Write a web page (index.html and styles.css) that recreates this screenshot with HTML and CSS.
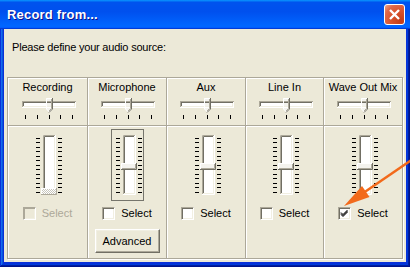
FILE: index.html
```html
<!DOCTYPE html>
<html>
<head>
  <title>Record from...</title>
  <link rel="stylesheet" href="styles.css">
</head>
<body>

<svg class="defs" width="0" height="0">
  <defs>
    <pattern id="hatch" width="2" height="2" patternUnits="userSpaceOnUse">
      <rect width="2" height="2" fill="#fff"/>
      <rect width="1" height="1" fill="#c8c6bc"/>
      <rect x="1" y="1" width="1" height="1" fill="#c8c6bc"/>
    </pattern>
    <symbol id="hslider" viewBox="0 0 56 22">
      <rect x="2" y="3" width="54" height="7" fill="#fff"/>
      <polygon points="26,0 33,0 33,11 29.5,14.5 26,11" fill="#f4f3ee"/>
      <g fill="none">
        <path d="M2 3.5H56M2.5 3V10" stroke="#aca899"/>
        <path d="M3 4.5H55M3.5 4V9" stroke="#716f64"/>
        <path d="M3 8.5H55M54.5 5V9" stroke="#f1efe2"/>
        <path d="M2 9.5H56M55.5 4V10" stroke="#fff"/>
        <path d="M26.5 11V0.5H32" stroke="#fff"/>
        <path d="M26.5 11L29.5 14" stroke="#fff"/>
        <path d="M32.5 0V11L29 14.5" stroke="#716f64"/>
        <path d="M31.5 1V10.5L29 13" stroke="#aca899"/>
      </g>
      <rect x="5" y="17" width="1" height="4"/>
      <rect x="17" y="17" width="1" height="4"/>
      <rect x="29" y="17" width="1" height="4"/>
      <rect x="40" y="17" width="1" height="4"/>
      <rect x="52" y="17" width="1" height="4"/>
    </symbol>
    <symbol id="vtrack" viewBox="0 0 33 72">
      <rect x="12" y="6" width="12" height="60" fill="#fff"/>
      <g fill="none">
        <path d="M12.5 66V6.5H24" stroke="#aca899"/>
        <path d="M13.5 65V7.5H23" stroke="#716f64"/>
        <path d="M13 64.5H23.5V8" stroke="#f1efe2"/>
        <path d="M12 65.5H24.5V6" stroke="#fff"/>
        <path d="M5 9.5h4M5 13.5h4M5 18.5h4M5 22.5h4M5 27.5h4M5 31.5h4M5 36.5h4M5 40.5h4M5 45.5h4M5 49.5h4M5 54.5h4M5 58.5h4M5 63.5h4" stroke="#000"/>
        <path d="M27 9.5h4M27 13.5h4M27 18.5h4M27 22.5h4M27 27.5h4M27 31.5h4M27 36.5h4M27 40.5h4M27 45.5h4M27 49.5h4M27 54.5h4M27 58.5h4M27 63.5h4" stroke="#000"/>
      </g>
    </symbol>
    <symbol id="vthumb" viewBox="0 0 16 7">
      <rect width="16" height="7" fill="#f4f3ee"/>
      <g fill="none">
        <path d="M0.5 7V0.5H16" stroke="#fff"/>
        <path d="M0 6.5H15.5V0" stroke="#716f64"/>
        <path d="M1 5.5H14.5V1" stroke="#aca899"/>
      </g>
    </symbol>
  </defs>
</svg>

<div class="window">
  <div class="titlebar">
    <span class="title">Record from...</span>
    <span class="close">
      <svg width="13" height="13" viewBox="0 0 13 13">
        <path d="M2 2L11 11M11 2L2 11" stroke="#fff" stroke-width="2.4"/>
      </svg>
    </span>
  </div>

  <div class="client">
    <p class="prompt">Please define your audio source:</p>

    <div class="mixer">
      <div class="col">
        <div class="top">
          <span class="label">Recording</span>
          <svg class="hslider"><use href="#hslider"/></svg>
        </div>
        <div class="bottom">
          <svg class="vslider" viewBox="0 0 33 72">
            <use href="#vtrack" width="33" height="72"/>
            <rect x="10" y="59" width="16" height="7" fill="url(#hatch)"/>
            <g fill="none">
              <path d="M10.5 66V59.5H26" stroke="#fff"/>
              <path d="M10 65.5H25.5V59" stroke="#aca899"/>
            </g>
          </svg>
          <div class="choice disabled"><span class="box"></span>Select</div>
        </div>
      </div>

      <div class="col">
        <div class="top">
          <span class="label">Microphone</span>
          <svg class="hslider"><use href="#hslider"/></svg>
        </div>
        <div class="bottom">
          <svg class="vslider" viewBox="0 0 33 72">
            <rect x="0.5" y="0.5" width="32" height="71" fill="none" stroke="#000" stroke-dasharray="1 1"/>
            <use href="#vtrack" width="33" height="72"/>
            <use href="#vthumb" x="10" y="34" width="16" height="7"/>
          </svg>
          <div class="choice"><span class="box"></span>Select</div>
          <button type="button" class="btn">Advanced</button>
        </div>
      </div>

      <div class="col">
        <div class="top">
          <span class="label">Aux</span>
          <svg class="hslider"><use href="#hslider"/></svg>
        </div>
        <div class="bottom">
          <svg class="vslider" viewBox="0 0 33 72">
            <use href="#vtrack" width="33" height="72"/>
            <use href="#vthumb" x="10" y="34" width="16" height="7"/>
          </svg>
          <div class="choice"><span class="box"></span>Select</div>
        </div>
      </div>

      <div class="col">
        <div class="top">
          <span class="label">Line In</span>
          <svg class="hslider"><use href="#hslider"/></svg>
        </div>
        <div class="bottom">
          <svg class="vslider" viewBox="0 0 33 72">
            <use href="#vtrack" width="33" height="72"/>
            <use href="#vthumb" x="10" y="34" width="16" height="7"/>
          </svg>
          <div class="choice"><span class="box"></span>Select</div>
        </div>
      </div>

      <div class="col">
        <div class="top">
          <span class="label">Wave Out Mix</span>
          <svg class="hslider"><use href="#hslider"/></svg>
        </div>
        <div class="bottom">
          <svg class="vslider" viewBox="0 0 33 72">
            <use href="#vtrack" width="33" height="72"/>
            <use href="#vthumb" x="10" y="34" width="16" height="7"/>
          </svg>
          <div class="choice">
            <span class="box">
              <svg width="11" height="11" viewBox="0 0 11 11">
                <path d="M2 4.5L4 6.5L8.5 2M2 5.5L4 7.5L8.5 3M2 6.5L4 8.5L8.5 4" stroke="#000" fill="none"/>
              </svg>
            </span>Select
          </div>
        </div>
      </div>
    </div>
  </div>

  <svg class="arrow" width="410" height="267" viewBox="0 0 410 267">
    <line x1="413" y1="159" x2="364" y2="192.5" stroke="#f26a1b" stroke-width="2.5"/>
    <polygon points="344,206 369.5,197 362,186" fill="#f26a1b"/>
  </svg>
</div>

</body>
</html>
```

FILE: styles.css
```css
* {
  box-sizing: border-box;
}

body {
  margin: 0;
  width: 410px;
  height: 267px;
  overflow: hidden;
  font-family: "Liberation Sans", Arial, sans-serif;
  font-size: 11px;
  color: #000;
}

.defs {
  position: absolute;
}

.window {
  position: relative;
  width: 410px;
  height: 267px;
  display: flex;
  flex-direction: column;
  background-color: #0831d9;
  box-shadow: inset -1px -1px #00138c, inset 1px 1px #0831d9, inset -2px -2px #001ea0,
    inset 2px 2px #166aee, inset -3px -3px #003bda, inset 3px 3px #0855dd;
}

.titlebar {
  height: 29px;
  flex: none;
  display: flex;
  align-items: center;
  justify-content: space-between;
  padding: 0 5px 1px 7px;
  background: linear-gradient(180deg, #0997ff, #0053ee 8%, #0050ee 40%, #0066ff 88%,
    #0066ff 93%, #005bff 95%, #003dd7 96%, #003dd7);
}

.title {
  color: #fff;
  font-weight: bold;
  font-size: 13px;
  letter-spacing: 0.2px;
  text-shadow: 1px 1px #0f1089;
}

.close {
  width: 21px;
  height: 21px;
  display: flex;
  align-items: center;
  justify-content: center;
  border: 1px solid #fff;
  border-radius: 3px;
  background: radial-gradient(circle at 85% 85%, #c23c17 0%, #d9532c 45%, #e0694a 75%, #eea58c 100%);
}

.client {
  flex: 1;
  margin: 0 4px 5px;
  padding: 12px 3px 3px;
  background: #ece9d8;
}

.prompt {
  margin: 0 0 23px 5px;
  line-height: 13px;
  letter-spacing: -0.2px;
}

.mixer {
  display: grid;
  grid-template-columns: 80px 79px 79px 78px 78px;
  height: 182px;
  border: 1px solid #aca899;
  box-shadow: 1px 1px 0 #fff;
}

.col {
  display: flex;
  flex-direction: column;
  border-right: 1px solid #aca899;
}

.col:last-child {
  border-right: 0;
}

.top {
  height: 48px;
  flex: none;
  display: flex;
  flex-direction: column;
  align-items: center;
  padding-top: 3px;
  border-bottom: 1px solid #aca899;
  box-shadow: inset 1px 1px #fff;
}

.label {
  line-height: 13px;
  white-space: nowrap;
}

.hslider {
  width: 56px;
  height: 22px;
  margin-top: 4px;
}

.bottom {
  flex: 1;
  display: flex;
  flex-direction: column;
  align-items: center;
  padding-top: 3px;
  box-shadow: inset 1px 1px #fff;
}

.vslider {
  width: 33px;
  height: 72px;
  flex: none;
}

.choice {
  display: flex;
  align-items: center;
  gap: 6px;
  margin-top: 6px;
  line-height: 13px;
  white-space: nowrap;
}

.box {
  width: 13px;
  height: 13px;
  display: flex;
  align-items: center;
  justify-content: center;
  background: #fff;
  border: 1px solid;
  border-color: #aca899 #fff #fff #aca899;
  box-shadow: inset 1px 1px #716f64, inset -1px -1px #f1efe2;
}

.disabled {
  color: #aca899;
}

.disabled .box {
  background: #ece9d8;
  box-shadow: inset 1px 1px #aca899, inset -1px -1px #f1efe2;
}

.btn {
  margin-top: 9px;
  width: 65px;
  height: 24px;
  padding: 0;
  font-family: inherit;
  font-size: 11px;
  color: #000;
  background: #ece9d8;
  border: 1px solid;
  border-color: #fff #716f64 #716f64 #fff;
  box-shadow: inset -1px -1px #aca899, inset 1px 1px #f1efe2;
}

.arrow {
  position: absolute;
  left: 0;
  top: 0;
  pointer-events: none;
}
```
